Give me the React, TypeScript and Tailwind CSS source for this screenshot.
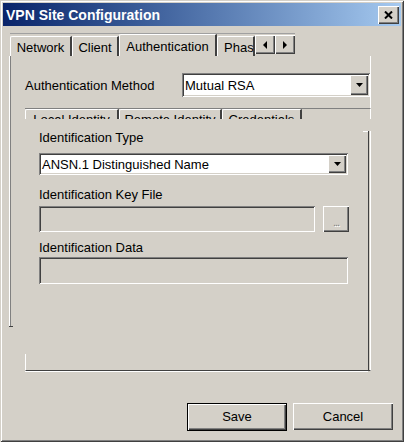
import React from 'react';

const raised =
  'shadow-[inset_1px_1px_0_#fff,inset_-1px_-1px_0_#404040,inset_-2px_-2px_0_#808080]';
const sunken =
  'shadow-[inset_1px_1px_0_#808080,inset_-1px_-1px_0_#fff,inset_2px_2px_0_#404040,inset_-2px_-2px_0_#d4d0c8]';

function DownArrow() {
  return (
    <svg width="7" height="4" viewBox="0 0 7 4">
      <path d="M0 0h7L3.5 4z" fill="#000" />
    </svg>
  );
}

function Combo({ value, className }: { value: string; className: string }) {
  return (
    <div className={`flex items-stretch bg-white p-[2px] ${sunken} ${className}`}>
      <div className="flex-1 flex items-center pl-[1px] text-[13px] leading-[15px] text-black">
        {value}
      </div>
      <div className={`w-[18px] bg-[#d4d0c8] flex items-center justify-center ${raised}`}>
        <DownArrow />
      </div>
    </div>
  );
}

function Tab({
  label,
  width,
  active,
  clip,
  pad = 'pt-[3px]',
}: {
  label: string;
  width: string;
  active?: boolean;
  clip?: boolean;
  pad?: string;
}) {
  return (
    <div
      className={`${width} ${active ? 'h-[22px]' : 'h-[20px]'} flex ${
        clip ? 'justify-start pl-[6px]' : 'justify-center'
      } ${pad} overflow-hidden border-t border-l border-white border-r-2 border-r-[#404040] rounded-tl-[2px] text-[13px] leading-[15px] text-black whitespace-nowrap`}
    >
      {label}
    </div>
  );
}

function ScrollArrow({ dir }: { dir: 'left' | 'right' }) {
  return (
    <div className={`w-[20px] h-[19px] bg-[#d4d0c8] flex items-center justify-center ${raised}`}>
      <svg width="4" height="8" viewBox="0 0 4 8">
        {dir === 'left' ? (
          <path d="M4 0v8L0 4z" fill="#000" />
        ) : (
          <path d="M0 0v8l4-4z" fill="#000" />
        )}
      </svg>
    </div>
  );
}

function Label({ children, className = '' }: { children: React.ReactNode; className?: string }) {
  return <div className={`text-[13px] leading-[15px] text-black ${className}`}>{children}</div>;
}

export default function App() {
  return (
    <div
      className="w-[404px] h-[442px] bg-[#d4d0c8] flex flex-col overflow-hidden shadow-[inset_1px_1px_0_#d4d0c8,inset_-1px_-1px_0_#404040,inset_2px_2px_0_#fff,inset_-2px_-2px_0_#808080]"
      style={{ fontFamily: '"Liberation Sans", Arial, sans-serif' }}
    >
      {/* title bar */}
      <div className="mt-[3px] mx-[3px] h-[23px] flex items-center justify-between bg-linear-to-r from-[#0a246a] to-[#a6caf0] pl-[3px] pr-[2px]">
        <span className="text-white font-bold text-[14px] leading-[16px]">VPN Site Configuration</span>
        <div className={`w-[21px] h-[18px] bg-[#d4d0c8] flex items-center justify-center ${raised}`}>
          <svg width="9" height="8" viewBox="0 0 9 8">
            <path d="M1 0.5l7 7M8 0.5l-7 7" stroke="#000" strokeWidth="2" />
          </svg>
        </div>
      </div>

      {/* outer tabs */}
      <div className="mt-[7px] ml-[10px] w-[285px] h-[23px] flex items-end border-t border-[#a0a0a0]">
        <Tab label="Network" width="w-[62px]" />
        <Tab label="Client" width="w-[47px]" />
        <Tab label="Authentication" width="w-[98px]" active pad="pt-[4px]" />
        <Tab label="Phase" width="w-[38px]" clip />
        <div className="self-start mt-[1px] flex">
          <ScrollArrow dir="left" />
          <ScrollArrow dir="right" />
        </div>
      </div>

      {/* outer panel */}
      <div className="flex items-start">
        <div className="ml-[9px] w-[2px] flex flex-col">
          <div className="h-[270px] w-[2px] border-l border-white bg-[#808080]" />
          <div className="h-px w-[4px] shrink-0 bg-[#404040]" />
        </div>

        <div className="ml-[14px] w-[346px] flex flex-col">
          <div className="h-[52px] pt-[17px] border-r border-white flex items-start justify-between">
            <Label className="mt-[5px]">Authentication Method</Label>
            <Combo value="Mutual RSA" className="w-[188px] h-[24px]" />
          </div>

          {/* inner tabs, cut off by the panel below */}
          <div className="h-[11px] border-t border-[#808080] border-r border-r-white overflow-hidden flex items-start">
            <Tab label="Local Identity" width="w-[94px]" active pad="pt-[2px]" />
            <Tab label="Remote Identity" width="w-[103px]" active pad="pt-[2px]" />
            <Tab label="Credentials" width="w-[80px]" active pad="pt-[2px]" />
          </div>

          {/* inner panel */}
          <div className="h-[252px] flex">
            <div className="flex-1 flex flex-col">
              <div className="pl-[14px] pt-[11px] flex flex-col">
                <Label>Identification Type</Label>
                <Combo value="ANSN.1 Distinguished Name" className="mt-[8px] w-[309px] h-[22px]" />

                <Label className="mt-[12px]">Identification Key File</Label>
                <div className="mt-[4px] flex gap-[8px]">
                  <div className={`w-[276px] h-[26px] ${sunken}`} />
                  <div className={`w-[26px] h-[26px] flex items-end justify-center pb-[6px] ${raised}`}>
                    <span className="text-[11px] leading-[8px] tracking-[-1px] text-[#808080] [text-shadow:1px_1px_0_#fff]">
                      ...
                    </span>
                  </div>
                </div>

                <Label className="mt-[8px]">Identification Data</Label>
                <div className={`mt-[2px] w-[309px] h-[27px] ${sunken}`} />
              </div>
              <div className="mt-auto h-[17px] border-l border-white border-b border-b-[#404040] shadow-[0_1px_0_#fff]" />
            </div>
            <div className="-ml-[5px] w-[8px] pt-[12px] flex">
              <div className="w-[5px] h-px bg-white" />
              <div className="w-[3px] border-l border-[#404040] border-r border-r-white border-b border-b-[#404040]" />
            </div>
          </div>
        </div>
      </div>

      {/* buttons */}
      <div className="mt-auto mb-[11px] mr-[11px] flex justify-end gap-[6px]">
        <div className="w-[100px] h-[28px] border border-black">
          <div className={`w-full h-full flex items-center justify-center text-[13px] text-black ${raised}`}>
            Save
          </div>
        </div>
        <div className={`w-[100px] h-[27px] flex items-center justify-center text-[13px] text-black ${raised}`}>
          Cancel
        </div>
      </div>
    </div>
  );
}
